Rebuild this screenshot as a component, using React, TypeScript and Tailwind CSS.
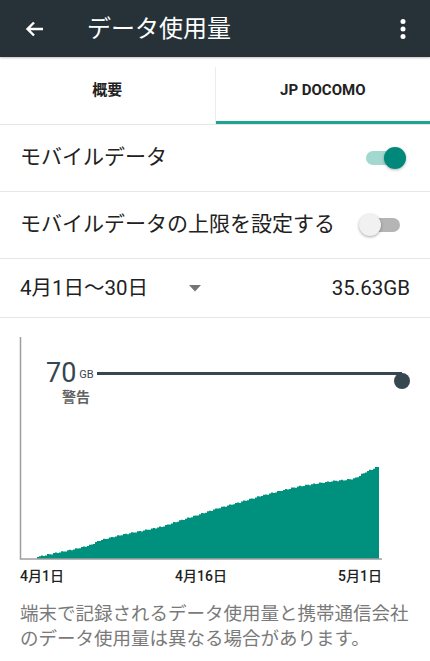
import React from "react";

const FONT = { fontFamily: "Roboto, 'Noto Sans CJK JP', sans-serif" };

// rough shape of the usage curve, in chart coordinates
const anchors: [number, number][] = [
  [37, 239], [50, 236], [70, 232], [90, 227], [100, 222], [120, 217], [140, 213],
  [160, 209], [175, 204], [200, 196], [218, 190], [240, 184], [260, 178], [283, 172],
  [300, 168], [333, 163], [345, 162], [355, 160], [365, 154], [379, 148],
];

function usagePath() {
  let d = `M37 241 L37 239`;
  let i = 0;
  for (let x = 39; x <= 379; x += 2) {
    while (i < anchors.length - 2 && anchors[i + 1][0] < x) i++;
    const [x0, y0] = anchors[i];
    const [x1, y1] = anchors[i + 1];
    const t = Math.min(1, Math.max(0, (x - x0) / (x1 - x0)));
    const jitter = Math.sin(x * 0.9) * 0.6;
    const y = y0 + (y1 - y0) * t + jitter;
    d += ` H${x} V${y.toFixed(1)}`;
  }
  d += ` H379 V241 Z`;
  return d;
}

function Toggle({ on }: { on: boolean }) {
  return (
    <div className="relative w-[46px] h-[24px]">
      {on ? (
        <>
          <div className="absolute left-[8px] top-[5px] w-[32px] h-[14px] rounded-full bg-[#a3d8d1]" />
          <div className="absolute left-[26px] top-[1px] w-[22px] h-[22px] rounded-full bg-[#00897b] shadow-[0_1px_3px_rgba(0,0,0,0.3)]" />
        </>
      ) : (
        <>
          <div className="absolute left-[2px] top-[5px] w-[40px] h-[14px] rounded-full bg-[#b5b5b5]" />
          <div className="absolute left-[1px] top-[1px] w-[22px] h-[22px] rounded-full bg-[#f1f1f1] shadow-[0_1px_3px_rgba(0,0,0,0.35)]" />
        </>
      )}
    </div>
  );
}

export default function App() {
  return (
    <div className="w-[430px] h-[661px] bg-white overflow-hidden" style={FONT}>
      {/* toolbar */}
      <div className="h-[57px] bg-[#263238] flex items-center relative z-10 shadow-[0_1px_2px_rgba(0,0,0,0.25)]">
        <svg width="19" height="16" viewBox="0 0 19 16" className="ml-[25px]">
          <path d="M18 8H2 M9 1.5 L2.5 8 L9 14.5" stroke="white" strokeWidth="2.4" fill="none" />
        </svg>
        <h1 className="ml-[43px] text-[24px] text-white leading-none">データ使用量</h1>
        <svg width="6" height="22" viewBox="0 0 6 22" className="ml-auto mr-[24px]">
          <circle cx="3" cy="3.5" r="2.5" fill="white" />
          <circle cx="3" cy="11" r="2.5" fill="white" />
          <circle cx="3" cy="18.5" r="2.5" fill="white" />
        </svg>
      </div>

      {/* tabs */}
      <div className="h-[68px] flex border-b border-[#e6e6e6]">
        <div className="flex-1 flex items-center justify-center text-[15px] font-bold text-[#222]">概要</div>
        <div className="flex-1 flex items-center justify-center text-[15px] font-bold text-[#222] border-l border-[#ececec] mt-[10px] relative">
          <span className="-mt-[10px]">JP DOCOMO</span>
          <div className="absolute left-0 right-0 bottom-0 h-[3px] bg-[#1fa393]" />
        </div>
      </div>

      {/* settings rows */}
      <div className="h-[67px] flex items-center justify-between pl-5 pr-[26px] border-b border-[#e6e6e6]">
        <span className="text-[21px] text-[#212121]">モバイルデータ</span>
        <Toggle on />
      </div>
      <div className="h-[67px] flex items-center justify-between pl-5 pr-[26px] border-b border-[#e6e6e6]">
        <span className="text-[21px] text-[#212121]">モバイルデータの上限を設定する</span>
        <Toggle on={false} />
      </div>
      <div className="h-[59px] flex items-center pl-5 pr-5 border-b border-[#e6e6e6]">
        <span className="text-[20.5px] text-[#212121] w-[169px]">4月1日〜30日</span>
        <svg width="12" height="7" viewBox="0 0 12 7">
          <path d="M0 0H12L6 6.5Z" fill="#757575" />
        </svg>
        <span className="ml-auto text-[20.5px] text-[#212121]">35.63GB</span>
      </div>

      {/* chart */}
      <div className="relative h-[248px]">
        <svg width="430" height="248" className="absolute inset-0">
          <path d={usagePath()} fill="#00917e" />
          <path d="M20.5 19 V241 H382" stroke="#9e9e9e" strokeWidth="1.5" fill="none" />
          <path d="M97 55.5 H402" stroke="#37474f" strokeWidth="3" />
          <circle cx="402" cy="63" r="8" fill="#37474f" />
        </svg>
        <div className="absolute left-[46px] top-[40px] flex items-end text-[#37474f]">
          <span className="text-[27px] leading-[30px]">70</span>
          <span className="text-[11px] ml-[3px] mb-[5px]">GB</span>
        </div>
        <div className="absolute left-[62px] top-[69px] text-[14px] font-bold text-[#616161]">警告</div>
      </div>
      <div className="flex justify-between pl-5 pr-[48px] text-[14px] font-medium text-[#212121] h-[26px]">
        <span>4月1日</span>
        <span>4月16日</span>
        <span>5月1日</span>
      </div>

      <p className="px-5 mt-[10px] text-[18.5px] leading-[25px] text-[#7a7a7a]">
        端末で記録されるデータ使用量と携帯通信会社のデータ使用量は異なる場合があります。
      </p>
    </div>
  );
}
